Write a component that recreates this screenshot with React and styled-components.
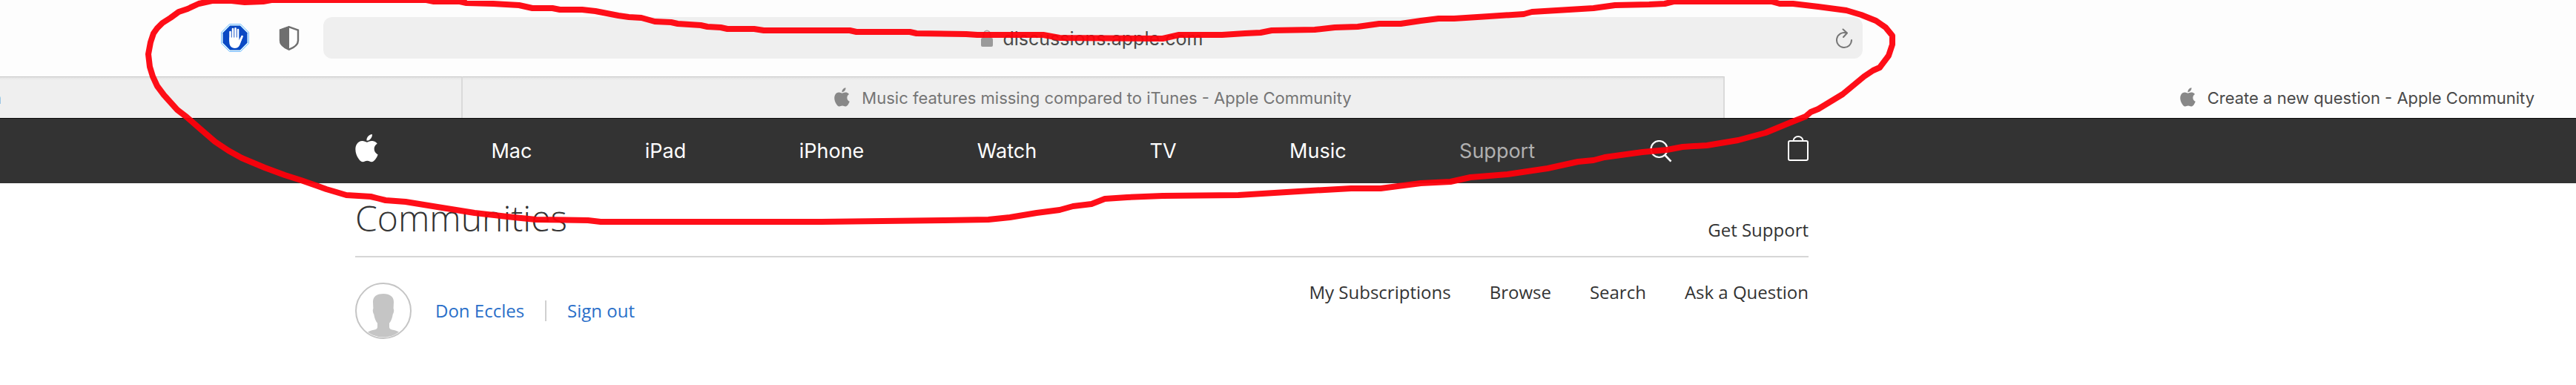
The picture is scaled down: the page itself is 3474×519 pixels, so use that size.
import React from "react";
import styled, { createGlobalStyle } from "styled-components";

const chromeFont = `Inter, "Liberation Sans", sans-serif`;
const pageFont = `"Open Sans", "Noto Sans", sans-serif`;

const navItems = ["Mac", "iPad", "iPhone", "Watch", "TV", "Music", "Support"];
const communityLinks = ["My Subscriptions", "Browse", "Search", "Ask a Question"];

const GlobalStyle = createGlobalStyle`
  * {
    box-sizing: border-box;
  }

  body {
    margin: 0;
    background: #fff;
    font-family: ${pageFont};
    overflow-x: hidden;
  }

  svg {
    display: block;
    flex: none;
  }
`;

const Page = styled.div`
  position: relative;
`;

const Toolbar = styled.header`
  display: flex;
  align-items: center;
  padding: 23px 962px 24px 298px;
  background: #fdfdfd;
`;

const IconButton = styled.button`
  flex: none;
  padding: 0;
  border: 0;
  background: none;
  cursor: pointer;
`;

const Extensions = styled.div`
  display: flex;
  align-items: center;
  gap: 40px;
  margin-right: 32px;
`;

const AddressBar = styled.div`
  flex: 1;
  display: grid;
  grid-template-columns: 1fr auto 1fr;
  align-items: center;
  height: 56px;
  padding: 2px 14px 0;
  border-radius: 12px;
  background: #efefef;
`;

const Address = styled.label`
  grid-column: 2;
  display: flex;
  align-items: center;
  gap: 14px;
`;

const AddressInput = styled.input`
  width: 273px;
  padding: 0;
  border: 0;
  outline: 0;
  background: none;
  color: #4a4a4a;
  font: 25px/32px ${chromeFont};
`;

const ReloadButton = styled(IconButton)`
  justify-self: end;
`;

const TabStrip = styled.nav`
  display: grid;
  grid-template-columns: minmax(0, 624fr) minmax(0, 1702fr) minmax(0, 1148fr);
  height: 56px;
  background: #fdfdfd;
`;

const Tab = styled.button`
  display: flex;
  align-items: center;
  justify-content: ${props => props.$align || "center"};
  gap: 16px;
  overflow: hidden;
  padding: ${props => props.$align ? "0 56px 0 0" : "0"};
  border: 0;
  border-top: 1px solid ${props => props.$active ? "#fdfdfd" : "#c8c8c8"};
  border-right: ${props => props.$active ? "0" : "2px solid #dadada"};
  background: ${props => props.$active ? "#fdfdfd" : "linear-gradient(#e2e2e2, #efefef 4px)"};
  color: ${props => props.$active ? "#4a4a4a" : "#757575"};
  font: 22px/28px ${chromeFont};
  white-space: nowrap;
`;

const CutTitle = styled.span`
  display: flex;
  justify-content: flex-end;
  width: 2px;
  margin-right: auto;
  overflow: hidden;
`;

const GlobalNav = styled.nav`
  height: 88px;
  padding: 0 479px;
  border-top: 1px solid #0c0c0c;
  background: #333;
`;

const NavList = styled.div`
  display: flex;
  align-items: center;
  justify-content: space-between;
  max-width: 1960px;
  height: 100%;
`;

const NavLink = styled.a`
  color: ${props => props.$current ? "#b0b0b0" : "#fff"};
  font: 27px/36px ${chromeFont};
  text-decoration: none;
`;

const Content = styled.main`
  max-width: 2439px;
  padding-left: 479px;
  color: #333;
`;

const TitleRow = styled.div`
  display: flex;
  align-items: flex-end;
  justify-content: space-between;
  padding: 14px 0 18px;
  border-bottom: 2px solid #d6d6d6;
`;

const Title = styled.h1`
  margin: 0;
  font-size: 48px;
  font-weight: 300;
  line-height: 66px;
`;

const TextLink = styled.a`
  color: ${props => props.$blue ? "#2a6fc9" : "#333"};
  font-size: 24px;
  line-height: 34px;
  text-decoration: none;
  white-space: nowrap;
`;

const MemberRow = styled.div`
  display: flex;
  align-items: flex-start;
  justify-content: space-between;
  padding: 30px 0 60px;
`;

const Member = styled.div`
  display: flex;
  align-items: center;
  gap: 28px;
  padding-top: 4px;
`;

const MemberName = styled.div`
  display: flex;
  align-items: center;
  gap: 32px;
`;

const Divider = styled.span`
  width: 2px;
  height: 28px;
  background: #d0d0d0;
`;

const LinkList = styled.nav`
  display: flex;
  gap: 52px;
`;

const Marker = styled.svg`
  position: absolute;
  top: 0;
  left: 0;
  width: 100%;
  pointer-events: none;
`;

// the box is taller than the glyph so that the leaf sits above the text line
const AppleLogo = ({ width, height, color, box = 24 }) => (
  <svg width={width} height={height} viewBox={`2 0 20 ${box}`} fill={color} aria-hidden="true">
    <path d="M12.152 6.896c-.948 0-2.415-1.078-3.96-1.04-2.04.027-3.91 1.183-4.961 3.014-2.117 3.675-.546 9.103 1.519 12.09 1.013 1.454 2.208 3.09 3.792 3.039 1.52-.065 2.09-.987 3.935-.987 1.831 0 2.35.987 3.96.948 1.637-.026 2.676-1.48 3.676-2.948 1.156-1.688 1.636-3.325 1.662-3.415-.039-.013-3.182-1.221-3.22-4.857-.026-3.04 2.48-4.494 2.597-4.559-1.429-2.09-3.623-2.324-4.39-2.376-2-.156-3.675 1.09-4.61 1.09zM15.53 3.83c.843-1.012 1.4-2.427 1.245-3.83-1.207.052-2.662.805-3.532 1.818-.78.896-1.454 2.338-1.273 3.714 1.338.104 2.715-.688 3.559-1.701" />
  </svg>
);

const BlockerIcon = () => (
  <svg width="38" height="38" viewBox="0 0 38 38">
    <path d="M11.5.5h15l11 11v15l-11 11h-15l-11-11v-15z" fill="#dcf8ff" stroke="#7dbcff" />
    <path d="M12.2 2.500h13.600l9.700 9.700v13.600l-9.700 9.700H12.200l-9.700-9.700V12.200z" fill="#0a49c4" />
    <path d="M12.500 11v12M16 7v15M19.500 6.200v15M23 8v15M28.500 17l-4 9" stroke="#fff" strokeWidth="2.600" strokeLinecap="round" />
    <path d="M11.200 18.500h13.100v4l3.500-6 1.900.6-3.200 8.400c-1.200 4.500-3.300 7.500-7.700 7.500-5 0-7.600-3.500-7.600-9z" fill="#fff" />
  </svg>
);

const ShieldIcon = () => (
  <svg width="28" height="33" viewBox="0 0 28 33">
    <path d="M14 1.300 26 5.500v14.200c0 5-5.500 9.300-12 12-6.500-2.700-12-7-12-12V5.500z" fill="#fdfdfd" stroke="#6f6f6f" strokeWidth="2.400" />
    <path d="M14 0 1 4.800v15c0 5.700 6 10.200 13 13.200z" fill="#6f6f6f" />
  </svg>
);

const LockIcon = () => (
  <svg width="16" height="24" viewBox="0 0 16 24">
    <path d="M3.500 12V6.500a4.500 5.200 0 0 1 9 0V12" fill="none" stroke="#a8a8a8" strokeWidth="1.800" />
    <rect x="0" y="11" width="16" height="12" rx="2" fill="#9a9a9a" />
  </svg>
);

const ReloadIcon = () => (
  <svg width="22" height="28" viewBox="0 0 22 28" fill="none" stroke="#777" strokeWidth="2" strokeLinecap="round" strokeLinejoin="round">
    <path d="M21 16a10 10 0 1 1-7-9.500M9.500 1.500l5.500 5-5 5.500" />
  </svg>
);

const SearchIcon = () => (
  <svg width="36" height="30" viewBox="-3 0 36 30" fill="none" stroke="#fff" strokeWidth="2.200">
    <circle cx="12.500" cy="12" r="11" />
    <path d="m20.300 20 8.200 8.600" strokeWidth="2.600" />
  </svg>
);

const BagIcon = () => (
  <svg width="28" height="41" viewBox="0 0 28 41" fill="none" stroke="#fff" strokeWidth="2">
    <rect x="1" y="7" width="26" height="26" rx="2" />
    <path d="M7.500 7a6.500 6 0 0 1 13 0" />
  </svg>
);

const Avatar = () => (
  <svg width="76" height="76" viewBox="0 0 76 76" role="img" aria-label="Don Eccles">
    <circle cx="38" cy="38" r="37" fill="#fff" stroke="#c5c5c5" strokeWidth="2" />
    <path d="M38 15c9 0 14 4 14 11l-.4 9c1 1 .8 5-.8 7.500-.8 5-2 8-3.800 11l-1 1v5c0 3 2 3.500 5 4.300 3.500.8 6 1.500 8 2.700C53.500 71 46 73.500 38 73.500S22.500 71 17 66.500c2-1.200 4.500-1.900 8-2.700 3-.8 5-1.300 5-4.300v-5l-1-1c-1.800-3-3-6-3.800-11-1.600-2.500-1.800-6.500-.8-7.500l-.4-9c0-7 5-11 14-11z" fill="#c5c5c5" />
  </svg>
);

const App = () => (
  <Page>
    <GlobalStyle />
    <Toolbar>
      <Extensions>
        <IconButton aria-label="Content blocker"><BlockerIcon /></IconButton>
        <IconButton aria-label="Privacy report"><ShieldIcon /></IconButton>
      </Extensions>
      <AddressBar>
        <Address>
          <LockIcon />
          <AddressInput type="text" aria-label="Address" defaultValue="discussions.apple.com" />
        </Address>
        <ReloadButton aria-label="Reload"><ReloadIcon /></ReloadButton>
      </AddressBar>
    </Toolbar>
    <TabStrip>
      <Tab>
        <CutTitle>n</CutTitle>
      </Tab>
      <Tab>
        <AppleLogo width={21} height={28} box={26} color="#888" />
        Music features missing compared to iTunes - Apple Community
      </Tab>
      <Tab $align="flex-end" $active>
        <AppleLogo width={21} height={28} box={26} color="#888" />
        Create a new question - Apple Community
      </Tab>
    </TabStrip>
    <GlobalNav>
      <NavList>
        <NavLink href="#apple" aria-label="Apple">
          <AppleLogo width={31} height={45} box={29} color="#fff" />
        </NavLink>
        {navItems.map(item => (
          <NavLink key={item} href={`#${item}`} $current={item === "Support"}>{item}</NavLink>
        ))}
        <IconButton aria-label="Search"><SearchIcon /></IconButton>
        <IconButton aria-label="Shopping bag"><BagIcon /></IconButton>
      </NavList>
    </GlobalNav>
    <Content>
      <TitleRow>
        <Title>Communities</Title>
        <TextLink href="#get-support">Get Support</TextLink>
      </TitleRow>
      <MemberRow>
        <Member>
          <MemberName>
            <Avatar />
            <TextLink href="#profile" $blue>Don Eccles</TextLink>
          </MemberName>
          <Divider />
          <TextLink href="#sign-out" $blue>Sign out</TextLink>
        </Member>
        <LinkList>
          {communityLinks.map(link => (
            <TextLink key={link} href={`#${link}`}>{link}</TextLink>
          ))}
        </LinkList>
      </MemberRow>
    </Content>
    <Marker viewBox="0 0 3474 310" fill="none" stroke="#ff000a" strokeWidth="8" strokeLinejoin="round" opacity="0.94" aria-hidden="true">
      <path d="M286 1 268 5 253 12 241 16 230 24 219 31 212 38 207 45 203 57 200 73 202 90 206 103 212 116 221 128 230 138 239 148 252 158 268 172 290 191 308 203 326 213 357 226 384 236 406 243 429 251 440 255 467 263 500 265 520 270 547 272 590 279 640 287 693 293 723 296 793 297 810 299 940 299 1108 299 1274 297 1333 296 1362 293 1398 287 1429 283 1447 278 1472 275 1490 268 1520 266 1568 264 1670 263 1751 258 1822 254 1862 254 1916 247 1956 245 1983 239 2033 235 2087 227 2128 218 2149 216 2164 212 2215 205 2248 202 2269 198 2302 196 2344 189 2381 179 2410 167 2435 157 2442 151 2452 147 2485 127 2514 103 2526 95 2535 91 2547 75 2552 60 2552 48 2543 37 2530 28 2510 20 2490 14 2452 9 2418 5 2400 5 2389 2 2257 2 2245 5 2224 6 2178 7 2149 11 2116 13 2066 16 2055 19 2008 22 1961 25 1940 25 1916 28 1889 32 1860 32 1831 36 1800 37 1773 40 1715 41 1700 44 1679 45 1648 47 1590 47 1568 52 1429 51 1407 47 1318 47 1303 46 1236 45 1227 43 1155 43 1146 41 1030 41 1017 39 981 39 972 37 954 36 945 34 914 32 905 30 883 29 865 24 848 23 834 21 803 15 785 13 755 13 745 11 718 11 700 7 665 5 629 4 620 2 585 2 575 0 464 0 366 0 355 2 330 3 312 1Z" />
    </Marker>
  </Page>
);

export default App;
